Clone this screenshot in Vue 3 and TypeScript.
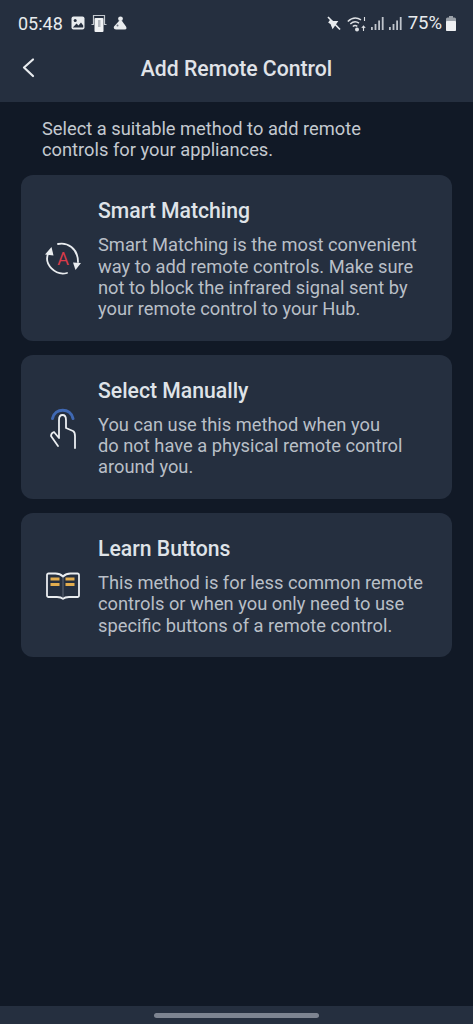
<script setup lang="ts">
interface Method { title: string; lines: string[]; icon: string }
const methods: Method[] = [
  { title: 'Smart Matching', icon: 'sync', lines: ['Smart Matching is the most convenient', 'way to add remote controls. Make sure', 'not to block the infrared signal sent by', 'your remote control to your Hub.'] },
  { title: 'Select Manually', icon: 'touch', lines: ['You can use this method when you', 'do not have a physical remote control', 'around you.'] },
  { title: 'Learn Buttons', icon: 'book', lines: ['This method is for less common remote', 'controls or when you only need to use', 'specific buttons of a remote control.'] }
]
</script>

<template>
  <div class="screen">
    <header class="top">
      <div class="status">
        <div class="left">
          <span class="time">05:48</span>
          <svg class="si" width="14" height="14" viewBox="0 0 14 14"><rect x="0.500" y="0.500" width="13" height="13" rx="2" fill="#e8ebee"/><circle cx="4.200" cy="4.500" r="1.500" fill="#252f3f"/><path d="M1.800 11.500 5.500 7.500l2 2 2.500-3 2.200 3v2z" fill="#252f3f"/></svg>
          <svg class="si" width="18" height="18" viewBox="0 0 18 18"><path d="M1.500 10.500H3.500V1.500H14.500V10.500H16.500" fill="none" stroke="#c2c7cd" stroke-width="1.200"/><rect x="4.500" y="4" width="9" height="14" rx="1" fill="#f0f2f4"/><rect x="8" y="6" width="2.500" height="7" fill="#b4b9c0"/></svg>
          <svg class="si" width="14" height="14" viewBox="0 0 14 14"><circle cx="7.500" cy="2.800" r="2.400" fill="#e8ebee"/><path d="M6 5 1 10.500Q0 13.500 3 13.500H11.500Q14.500 13.500 13 10.500L9 5z" fill="#e8ebee"/><circle cx="4.500" cy="9.500" r="1" fill="#6a7280"/></svg>
        </div>
        <div class="right">
          <svg class="si mute" width="14" height="15" viewBox="0 0 14 15"><path d="M.5 5h3l4.500-3v10L3.500 9h-3z" fill="#e8ebee" transform="rotate(35 6 7.500) translate(1 .5)"/><path d="M1 1l12 12.500" stroke="#e8ebee" stroke-width="1.700"/></svg>
          <svg class="si wifi" width="20" height="17" viewBox="0 0 20 17" fill="none" stroke="#dde0e4" stroke-width="1.500"><path d="M.8 6.500C5 2.500 10 2.300 14 4.800M3.300 9c3-2.700 6-2.700 8.700-.8M5.800 11.500c1.500-1.200 3-1.200 4.500-.2"/><circle cx="10" cy="14.500" r="2" fill="#dde0e4" stroke="none"/><path d="M16.500 16v-4.500M14.800 13l1.700-2 1.700 2M17.500 2v4" stroke-width="1.100"/></svg>
          <svg class="si sig" width="13" height="13" viewBox="0 0 13 13" fill="#bfc4cb"><rect x="0" y="10" width="1.800" height="3"/><rect x="3.600" y="7" width="1.800" height="6"/><rect x="7.200" y="3.500" width="1.800" height="9.500"/><rect x="10.800" y="0" width="1.800" height="13"/></svg>
          <svg class="si sig2" width="13" height="13" viewBox="0 0 13 13" fill="#bfc4cb"><rect x="0" y="10" width="1.800" height="3"/><rect x="3.600" y="7" width="1.800" height="6"/><rect x="7.200" y="3.500" width="1.800" height="9.500"/><rect x="10.800" y="0" width="1.800" height="13"/></svg>
          <span class="pct">75%</span>
          <svg class="si" width="10" height="15" viewBox="0 0 10 15"><rect x="3" y="0" width="4" height="2" fill="#9aa0a8"/><rect x="0" y="1.500" width="10" height="13.500" rx="1.500" fill="#9aa0a8"/><rect x="0" y="5" width="10" height="10" rx="1" fill="#eef0f2"/></svg>
        </div>
      </div>
      <div class="bar">
        <svg class="back" width="14" height="22" viewBox="0 0 14 22" fill="none"><path d="M12 2.500 3 10.500l9 8.500" stroke="#e8ebee" stroke-width="2.200" stroke-linecap="round" stroke-linejoin="round"/></svg>
        <h1>Add Remote Control</h1>
      </div>
    </header>

    <main class="body">
      <p class="intro">Select a suitable method to add remote<br>controls for your appliances.</p>
      <section v-for="m in methods" :key="m.title" class="card">
        <div class="ico">
          <svg v-if="m.icon === 'sync'" width="36" height="34" viewBox="0 0 36 34" fill="none" stroke="#e9ecef" stroke-width="1.800" stroke-linecap="round">
            <path d="M13 2C22 0 33 6 33 20"/>
            <path d="M3 12C-1 22 10 34 22 31"/>
            <path d="M28 20.500l8 .5-5.500 7z" fill="#e9ecef" stroke="none"/>
            <path d="M6.500 5l2 8.500-8.500-1z" fill="#e9ecef" stroke="none"/>
            <text x="18" y="22.500" text-anchor="middle" class="aglyph">A</text>
          </svg>
          <svg v-else-if="m.icon === 'touch'" width="32" height="44" viewBox="0 0 32 44" fill="none" stroke-linecap="round" stroke-linejoin="round">
            <path d="M5.500 12.500C8 1.500 23.500 1.500 26 12.500" stroke="#3f68b3" stroke-width="3"/>
            <path d="M11 40 4 30q0-3 3-4l5 6V14q0-5 3.500-5t3.500 5v8l7 3q2 1 2 5v12" stroke="#eceff2" stroke-width="1.800"/>
          </svg>
          <svg v-else width="34" height="28" viewBox="0 0 34 28" fill="none">
            <path d="M17 4.500V26.500" stroke="#4d5665" stroke-width="1.500"/>
            <path d="M17 4.500C14.500 2 12 1.500 9.500 1.500H2.500A1.500 1.500 0 0 0 1 3v20.500A1.500 1.500 0 0 0 2.500 25H11c2.500 0 4.500.3 6 1.800 1.500-1.500 3.500-1.800 6-1.800h8.500a1.500 1.500 0 0 0 1.500-1.500V3a1.500 1.500 0 0 0-1.500-1.500h-7C22 1.500 19.500 2 17 4.500z" stroke="#e9ecef" stroke-width="1.800" stroke-linejoin="round"/>
            <path d="M4.500 7h9M4.500 12.500h9M19.500 7h9M19.500 12.500h9" stroke="#e3ad4e" stroke-width="3"/>
          </svg>
        </div>
        <div class="txt">
          <h2>{{ m.title }}</h2>
          <p><template v-for="(l, i) in m.lines" :key="i">{{ l }}<br></template></p>
        </div>
      </section>
    </main>

    <footer class="nav"><span class="pill"></span></footer>
  </div>
</template>

<style>
html, body { margin: 0; background: #111926; }
</style>

<style scoped>
.screen { width: 473px; height: 1024px; display: flex; flex-direction: column; background: #111926; font-family: Roboto, "Noto Sans", sans-serif; overflow: hidden; }
.top { height: 102px; background: #252f3f; box-sizing: border-box; padding-top: 11px; flex: none; }
.status { height: 24px; display: flex; justify-content: space-between; align-items: center; padding: 0 17px 0 18px; color: #e8ebee; }
.left, .right { display: flex; align-items: center; }
.left { gap: 5px; }
.right { gap: 4px; }
.time { font-size: 18px; margin-right: 3px; }
.pct { font-size: 18.500px; margin-left: 2px; }
.si { display: block; }
.mute { margin-right: 2px; }
.sig2 { margin-left: 1px; }
.bar { position: relative; height: 44px; margin-top: 11px; display: flex; align-items: center; justify-content: center; }
.back { position: absolute; left: 21px; top: 11px; }
h1 { margin: 0; font-size: 21.200px; font-weight: 500; color: #e0e3e8; }
.body { flex: 1; padding: 16px 21px 0; display: flex; flex-direction: column; gap: 13.500px; }
.intro { margin: 0 0 0 21px; font-size: 18.300px; line-height: 21.330px; color: #c4c9d0; height: 43.500px; white-space: nowrap; }
.card { background: #252f3f; border-radius: 12px; display: flex; align-items: center; padding: 24px 20px 21.400px 0; }
.ico { width: 77px; flex: none; display: flex; justify-content: center; padding-left: 6px; box-sizing: border-box; }
.txt { flex: 1; }
h2 { margin: 0 0 11.300px; font-size: 21.200px; line-height: 24px; font-weight: 500; color: #dfe3e8; }
.txt p { margin: 0; font-size: 18.300px; line-height: 21.330px; color: #b9bfc7; white-space: nowrap; }
.aglyph { font-family: Roboto, sans-serif; font-size: 18px; fill: #d93b4a; stroke: none; font-weight: 400; }
.nav { height: 18px; background: #252f3f; flex: none; display: flex; justify-content: center; padding-top: 7px; box-sizing: border-box; }
.pill { width: 165px; height: 5px; background: #7d8491; border-radius: 3px; }
</style>
